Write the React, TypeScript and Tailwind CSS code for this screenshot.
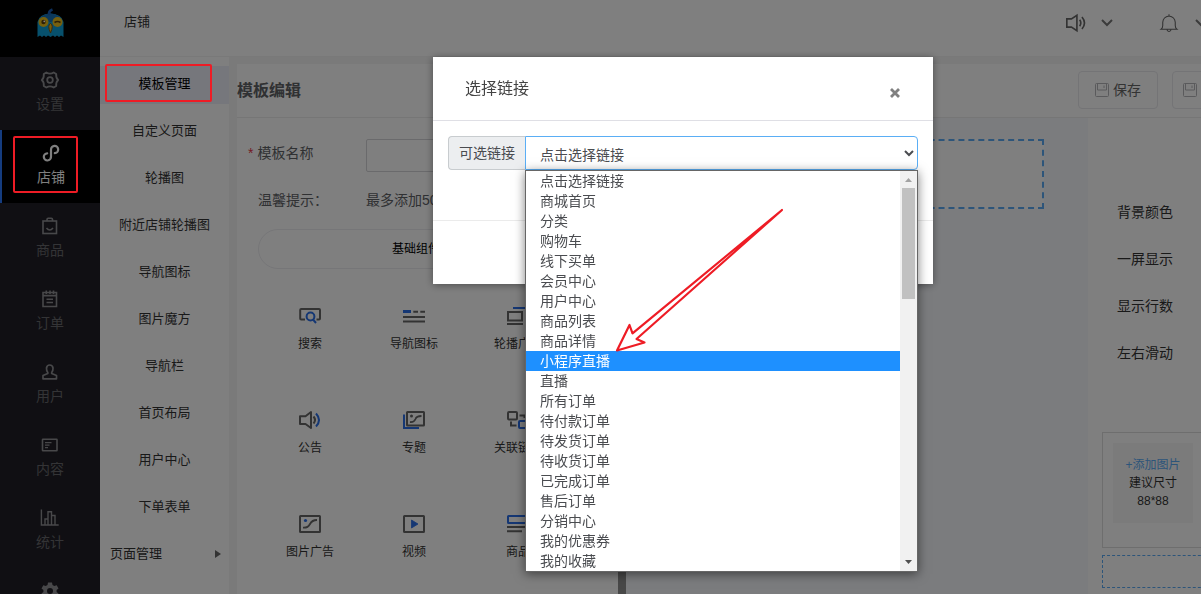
import type { ReactNode } from "react";
import clsx from "clsx";

function Svg({ size = "size-6", children }: { size?: string; children: ReactNode }) {
  return (
    <svg
      className={clsx(size, "shrink-0")}
      viewBox="0 0 24 24"
      fill="none"
      stroke="currentColor"
      strokeWidth="2"
      aria-hidden="true"
    >
      {children}
    </svg>
  );
}

const BLUE = "#2a6fe8";

const navItems: { label: string; active?: boolean; iconOnly?: boolean; icon: ReactNode }[] = [
  {
    label: "设置",
    icon: (
      <Svg>
        <path
          strokeWidth="1.8"
          strokeLinejoin="round"
          d="M8.300 4.500 Q12 6.800 15.700 4.500 L18.200 6 Q17.800 10 20.200 12 Q17.800 14 18.200 18 L15.700 19.500 Q12 17.200 8.300 19.500 L5.800 18 Q6.200 14 3.800 12 Q6.200 10 5.800 6 Z"
        />
        <circle cx="12" cy="12" r="2.800" strokeWidth="1.800" />
      </Svg>
    ),
  },
  {
    label: "店铺",
    active: true,
    icon: (
      <Svg>
        <path
          strokeLinecap="round"
          strokeWidth="2.200"
          d="M8.200 12.300 A3.600 3.600 0 1 0 12 15.800 V8.600 A3.600 3.600 0 1 1 15.800 12.100"
        />
      </Svg>
    ),
  },
  {
    label: "商品",
    icon: (
      <Svg>
        <rect x="5" y="7" width="13.500" height="12.500" strokeWidth="1.600" />
        <path strokeWidth="1.600" d="M9 7 V5.500 Q9 4.300 10.200 4.300 H13.300 Q14.500 4.300 14.500 5.500 V7 M8.500 14 Q11.750 18 15 14" />
      </Svg>
    ),
  },
  {
    label: "订单",
    icon: (
      <Svg>
        <path strokeWidth="1.600" d="M5 5.500 H18.500 V19.500 H5 Z M5 8.600 H18.500 M8.500 12.300 H15 M8.500 15.500 H15 M8.300 3.500 V7 M12 3.500 V7 M15.500 3.500 V7" />
      </Svg>
    ),
  },
  {
    label: "用户",
    icon: (
      <Svg>
        <path
          strokeWidth="1.700"
          strokeLinejoin="round"
          d="M9.800 12.500 Q8.300 10.500 8.500 8 Q9 5 11.700 5 Q14.500 5 15 8 Q15.200 10.500 13.700 12.500 V13.500 L18.500 15.500 V18.800 H5 V15.500 L9.800 13.500 Z"
        />
      </Svg>
    ),
  },
  {
    label: "内容",
    icon: (
      <Svg>
        <rect x="4.500" y="6.200" width="14.500" height="11.600" rx="0.500" strokeWidth="1.600" />
        <path strokeWidth="1.300" d="M7 9.700 H13.500 M7 12.200 H11.500 M7 14.700 H10" />
      </Svg>
    ),
  },
  {
    label: "统计",
    icon: (
      <Svg>
        <path strokeWidth="1.400" d="M3.400 3.500 V19 H20.700 M7 19 V13 H10 M10 19 V5.700 H13.500 V19 M13.500 9.500 H17 V19" />
      </Svg>
    ),
  },
  {
    label: "系统",
    iconOnly: true,
    icon: (
      <Svg>
        <path
          fill="currentColor"
          stroke="none"
          fillRule="evenodd"
          d="M10 3.500 H14 L14.500 6 L16.300 7 L18.700 6.200 L20.500 9.500 L18.600 11 V13 L20.500 14.500 L18.700 17.800 L16.300 17 L14.500 18 L14 20.500 H10 L9.500 18 L7.700 17 L5.300 17.800 L3.500 14.500 L5.400 13 V11 L3.500 9.500 L5.300 6.200 L7.700 7 L9.500 6 Z M12 9 A3 3 0 1 0 12 15 A3 3 0 1 0 12 9 Z"
        />
      </Svg>
    ),
  },
];

const menuItems = [
  "模板管理",
  "自定义页面",
  "轮播图",
  "附近店铺轮播图",
  "导航图标",
  "图片魔方",
  "导航栏",
  "首页布局",
  "用户中心",
  "下单表单",
];

const widgets: { label: string; icon: ReactNode }[] = [
  {
    label: "搜索",
    icon: (
      <Svg>
        <path d="M7 15.500 H3.200 Q2.200 15.500 2.200 14.500 V6 Q2.200 5 3.200 5 H21 Q22 5 22 6 V14.500 Q22 15.500 21 15.500 H18.500" />
        <circle cx="12.500" cy="12.500" r="3.900" stroke={BLUE} />
        <path d="M15 15.500 L18 19" stroke={BLUE} />
      </Svg>
    ),
  },
  {
    label: "导航图标",
    icon: (
      <Svg>
        <path d="M1 7.500 H9" stroke={BLUE} strokeWidth="3" />
        <path d="M11.300 7.800 H16 M18.300 7.800 H23 M1 13 H23 M1 17.500 H23" />
      </Svg>
    ),
  },
  {
    label: "轮播广告",
    icon: (
      <Svg>
        <path d="M7 4 H23" stroke={BLUE} />
        <path d="M2 8 H16 V16.500 H2 Z M1 20 H17" />
      </Svg>
    ),
  },
  {
    label: "公告",
    icon: (
      <Svg>
        <path strokeLinejoin="round" d="M2 8.200 H7.500 L13 4 V20 L7.500 16 H2 Z" />
        <path d="M15.500 8.500 Q18.500 12 15.500 15.500" />
        <path d="M18 5.500 Q24 12 18 18.500" stroke={BLUE} />
      </Svg>
    ),
  },
  {
    label: "专题",
    icon: (
      <Svg>
        <rect x="5" y="4" width="17" height="13.500" rx="0.500" />
        <path strokeWidth="1.800" d="M8 14 Q12 14.500 13.500 11 Q14.500 8 19.500 8" />
        <circle cx="9.500" cy="8" r="1.500" fill="currentColor" stroke="none" />
        <path d="M2 6.500 V20 H17" stroke={BLUE} />
      </Svg>
    ),
  },
  {
    label: "关联链接",
    icon: (
      <Svg>
        <rect x="2" y="4" width="9" height="7.500" rx="1" />
        <path d="M13.500 7.500 H18.500 V10 M5 13.500 V17.500 H10.500" />
        <rect x="13" y="13" width="9" height="7" rx="1" stroke={BLUE} />
      </Svg>
    ),
  },
  {
    label: "图片广告",
    icon: (
      <Svg>
        <rect x="2" y="4" width="20" height="16" rx="0.500" />
        <path strokeWidth="1.800" d="M5 15.700 Q10 16 12 12 Q14 8 19 8" />
        <circle cx="7.500" cy="8.500" r="1.600" fill={BLUE} stroke="none" />
      </Svg>
    ),
  },
  {
    label: "视频",
    icon: (
      <Svg>
        <rect x="2" y="4" width="20" height="16" rx="0.500" />
        <path d="M9.500 8 L16 12 L9.500 16 Z" fill={BLUE} stroke={BLUE} strokeWidth="0.800" strokeLinejoin="round" />
      </Svg>
    ),
  },
  {
    label: "商品",
    icon: (
      <Svg>
        <rect x="2" y="4" width="20" height="7" rx="0.500" stroke={BLUE} />
        <path d="M1 15 H23 M1 19.300 H16" />
      </Svg>
    ),
  },
];

const linkOptions = [
  "点击选择链接",
  "商城首页",
  "分类",
  "购物车",
  "线下买单",
  "会员中心",
  "用户中心",
  "商品列表",
  "商品详情",
  "小程序直播",
  "直播",
  "所有订单",
  "待付款订单",
  "待发货订单",
  "待收货订单",
  "已完成订单",
  "售后订单",
  "分销中心",
  "我的优惠券",
  "我的收藏",
];

function OwlLogo() {
  return (
    <svg className="h-8 w-8" viewBox="0 0 32 32" aria-hidden="true">
      <path
        d="M3.500 29 V14 Q5 6 16 5.500 Q28 6 29.500 14 V29 L27 27.500 L25 29 L23 27.500 L21 29 L19 27.500 L16.500 29 L14 27.500 L12 29 L10 27.500 L8 29 L6 27.500 Z"
        fill="#0fa0d8"
      />
      <path d="M5 12 Q8 6 16 5.500 Q25 6 28 12 L16 14 Z" fill="#1872b8" />
      <path d="M15.500 7 Q14 3 18.500 1.500" fill="none" stroke="#1a5fb8" strokeWidth="2.800" />
      <circle cx="9.500" cy="14" r="5" fill="#ecc01c" />
      <circle cx="23.500" cy="14" r="5" fill="#ecc01c" />
      <circle cx="9.500" cy="14" r="2.200" fill="#5a4010" />
      <circle cx="10.300" cy="13.300" r="0.900" fill="#fff" />
      <path d="M20.500 14.500 Q23.500 12.500 26.500 14.500" fill="none" stroke="#5a4010" strokeWidth="1.600" />
      <path d="M16.500 15.500 Q20 17 16.500 25 Q13 17 16.500 15.500 Z" fill="#f0b818" stroke="#7a5410" strokeWidth="1" />
    </svg>
  );
}

function Sidebar() {
  return (
    <nav className="flex w-[100px] shrink-0 flex-col overflow-hidden bg-[#201f26]">
      <div className="flex h-[57px] shrink-0 items-center justify-center bg-black pb-2.5">
        <OwlLogo />
      </div>
      {navItems.map((item) => (
        <a
          key={item.label}
          href="#"
          aria-label={item.label}
          className={clsx(
            "relative flex h-[73px] shrink-0 flex-col items-center gap-0.5 pt-[11px] text-sm leading-5",
            item.active
              ? "border-l-2 border-[#2a78ff] bg-black text-white"
              : "text-[#68686c]",
          )}
        >
          <span className={item.active ? "text-white" : "text-[#909094]"}>{item.icon}</span>
          {!item.iconOnly && item.label}
          {item.active && (
            <span className="absolute top-1.5 left-[11px] z-50 h-[57px] w-[65px] rounded-xs border-2 border-[#ee1c25]" />
          )}
        </a>
      ))}
    </nav>
  );
}

function TopBar() {
  return (
    <header className="flex h-[57px] shrink-0 border-b border-[#f2f2f2] bg-white pl-6 text-[13px] leading-5 text-[#333]">
      <span className="pt-3">店铺</span>
      <div className="ml-auto flex h-[46px] w-[136px] items-center overflow-hidden text-[#666]">
        <Svg size="size-[22px]">
          <path strokeWidth="1.800" d="M2 7.500 H7 L13 3.500 V20.500 L7 16.500 H2 Z M16 8.500 Q18.500 12 16 15.500 M18.500 5.500 Q24 12 18.500 18.500" />
        </Svg>
        <span className="ml-3.5 text-[#777]">
          <Svg size="size-3">
            <path strokeWidth="4" d="M2 6 L12 16 L22 6" />
          </Svg>
        </span>
        <span className="ml-[46px]">
          <Svg size="size-5">
            <path strokeWidth="1.300" d="M2.500 19.500 H21.500 Q19.500 18 19.500 15 V11 Q19 4.500 12 3.500 Q5 4.500 4.500 11 V15 Q4.500 18 2.500 19.500 Z M9.500 20 Q12 24.500 14.500 20 M12 3.500 V1.500" />
          </Svg>
        </span>
        <span className="ml-4 text-[#777]">
          <Svg size="size-3">
            <path strokeWidth="4" d="M2 6 L12 16 L22 6" />
          </Svg>
        </span>
      </div>
    </header>
  );
}

function SubMenu() {
  return (
    <aside className="flex w-[129px] shrink-0 flex-col gap-[9px] bg-white pt-[9px] text-[13px] text-[#333]">
      {menuItems.map((label, i) => (
        <a
          key={label}
          href="#"
          className={clsx(
            "relative flex h-[38px] shrink-0 items-center justify-center pb-0.5",
            i === 0 && "bg-[#edeef8] text-black",
          )}
        >
          {label}
          {i === 0 && (
            <span className="absolute -top-0.5 left-[5px] z-50 h-[38px] w-[107px] rounded-xs border-2 border-[#ee1c25]" />
          )}
        </a>
      ))}
      <a href="#" className="flex h-[38px] shrink-0 items-center justify-between pr-2 pb-0.5 pl-2.5">
        页面管理
        <svg className="h-2 w-[6px]" viewBox="0 0 6 8" aria-hidden="true">
          <path d="M0 0 L6 4 L0 8 Z" fill="#666" />
        </svg>
      </a>
    </aside>
  );
}

function SaveIcon() {
  return (
    <svg className="size-3.5 shrink-0" viewBox="0 0 14 14" fill="none" stroke="#b4b4b8" aria-hidden="true">
      <rect x="0.500" y="0.500" width="13" height="13" rx="1" />
      <path d="M2.500 0.500 V7 H11.500 V0.500 M9 2.500 V5" />
    </svg>
  );
}

const toolButton =
  "flex h-[38px] w-20 shrink-0 items-center gap-1 rounded border border-[#e8e8ec] text-sm text-[#666]";

function ComponentPanel() {
  return (
    <div className="flex w-[389px] shrink-0 overflow-hidden">
      <div className="min-w-0 flex-1 overflow-hidden pt-[21px] pl-[11px] text-sm text-[#606266]">
        <div className="flex items-start">
          <label htmlFor="tpl-name" className="w-[118px] shrink-0 leading-7">
            <span className="mr-1 text-[#e8394a]">*</span>
            模板名称
          </label>
          <input id="tpl-name" className="h-[33px] min-w-0 flex-1 rounded-xs border border-[#d4d4d8]" />
        </div>
        <div className="mt-[18px] flex pl-2.5 leading-5">
          <span className="w-[108px] shrink-0">温馨提示：</span>
          <span className="shrink-0 whitespace-nowrap">最多添加50个组件</span>
        </div>
        <div className="mt-[19px] ml-2.5 w-[316px]">
          <button
            type="button"
            className="h-10 w-full rounded-full border border-[#ececf0] text-center text-xs text-black"
          >
            基础组件
          </button>
          <div className="mt-[7px] grid w-[312px] grid-cols-3">
            {widgets.map((w) => (
              <button
                key={w.label}
                type="button"
                className="flex h-[104px] flex-col items-center justify-center gap-[7px] text-xs leading-[18px] text-[#333] outline-none"
              >
                <span className="text-[#666]">{w.icon}</span>
                {w.label}
              </button>
            ))}
          </div>
        </div>
      </div>
      <div className="w-2 shrink-0 bg-[#909090]" />
    </div>
  );
}

function SettingsPanel() {
  return (
    <div className="w-[113px] shrink-0 overflow-hidden bg-white pl-3.5 text-sm text-[#333]">
      <div className="flex flex-col gap-[27px] pt-[84px] pl-[15px] leading-5">
        <span>背景颜色</span>
        <span>一屏显示</span>
        <span>显示行数</span>
        <span>左右滑动</span>
      </div>
      <div className="mt-[69px] h-[116px] w-[240px] border border-[#dcdcdc] p-2.5">
        <div className="flex size-20 flex-col items-center justify-center bg-[#f7f7f7] text-xs leading-[18px]">
          <button type="button" className="whitespace-nowrap text-[#5aaaf5]">
            +添加图片
          </button>
          <span>建议尺寸</span>
          <span>88*88</span>
        </div>
      </div>
      <div className="mt-[7px] h-[33px] w-[240px] border border-dashed border-[#5aaaf5]" />
    </div>
  );
}

function Editor() {
  return (
    <main className="mt-[7px] ml-2 flex min-w-0 flex-1 flex-col bg-white">
      <div className="flex h-[54px] shrink-0 items-center overflow-hidden border-b border-[#ececec]">
        <h1 className="text-base font-bold text-[#606266]">模板编辑</h1>
        <div className="ml-auto flex w-[123px] gap-3.5 overflow-hidden pb-0.5">
          <button type="button" className={clsx(toolButton, "pl-4")}>
            <SaveIcon />
            保存
          </button>
          <button type="button" aria-label="保存并返回" className={clsx(toolButton, "pl-2.5")}>
            <SaveIcon />
          </button>
        </div>
      </div>
      <div className="flex min-h-0 flex-1">
        <ComponentPanel />
        <div className="min-w-0 flex-1 bg-[#f6f8fc] px-11 pt-[21px]">
          <div className="h-[70px] border-2 border-dashed border-[#5aaaf5] bg-white" />
        </div>
        <SettingsPanel />
      </div>
    </main>
  );
}

function OptionList() {
  return (
    <div className="absolute top-full right-0 left-0 z-10 flex border border-[#666] bg-white shadow-[0_2px_10px_rgba(0,0,0,0.5)]">
      <ul role="listbox" aria-label="可选链接" className="min-w-0 flex-1 text-sm leading-5 text-[#4a4c50]">
        {linkOptions.map((label) => {
          const selected = label === "小程序直播";
          return (
            <li
              key={label}
              role="option"
              aria-selected={selected}
              className={clsx("h-5 pl-3.5", selected && "bg-[#1e90ff] text-white")}
            >
              {label}
            </li>
          );
        })}
      </ul>
      <div className="flex w-[17px] shrink-0 flex-col items-center bg-[#f1f1f1]">
        <svg className="h-[17px] w-[17px] shrink-0" viewBox="0 0 17 17" aria-hidden="true">
          <path d="M5 11 L8.500 7 L12 11 Z" fill="#a3a3a3" />
        </svg>
        <div className="h-[111px] w-[13px] bg-[#c1c1c1]" />
        <svg className="mt-auto h-[17px] w-[17px] shrink-0" viewBox="0 0 17 17" aria-hidden="true">
          <path d="M5 6 L8.500 10 L12 6 Z" fill="#505050" />
        </svg>
      </div>
      <svg className="absolute top-[34px] left-[84px] h-[152px] w-[180px]" viewBox="610 205 180 152" aria-hidden="true">
        <path
          d="M782 210 L632.500 333.300 L629.500 325 L617 350.500 L644.500 342.500 L636.500 339 Z"
          fill="none"
          stroke="#ee1c25"
          strokeWidth="2.200"
          strokeLinejoin="round"
        />
      </svg>
    </div>
  );
}

function LinkDialog() {
  return (
    <div className="fixed inset-0 z-40 bg-black/50 pt-[57px] pl-[433px]">
      <section
        role="dialog"
        aria-labelledby="dialog-title"
        className="w-[500px] bg-white shadow-[0_1px_8px_rgba(0,0,0,0.4)]"
      >
        <div className="flex h-16 items-center justify-between border-b border-[#dfdfe5] px-8">
          <h2 id="dialog-title" className="text-base text-[#444]">
            选择链接
          </h2>
          <button type="button" aria-label="关闭" className="mt-2 p-px">
            <svg className="size-2.5" viewBox="0 0 10 10" stroke="#808080" strokeWidth="2.800" aria-hidden="true">
              <path d="M1 1 L9 9 M9 1 L1 9" />
            </svg>
          </button>
        </div>
        <div className="h-[99px] px-[15px] pt-[15px]">
          <div className="relative flex h-[34px] text-sm text-[#4a4c50]">
            <label
              htmlFor="link-select"
              className="flex w-[77px] shrink-0 items-center justify-center rounded-l border border-r-0 border-[#c8cccf] bg-[#eceef0]"
            >
              可选链接
            </label>
            <select
              id="link-select"
              className="min-w-0 flex-1 rounded-r border border-[#5aaef5] bg-white pt-1 pl-2.5 text-sm text-[#4a4c50] outline-none"
            >
              <option>点击选择链接</option>
            </select>
            <div className="absolute top-full right-0 left-[77px]">
              <OptionList />
            </div>
          </div>
        </div>
        <div className="h-16 border-t border-[#ebebeb]" />
      </section>
    </div>
  );
}

export default function App() {
  return (
    <div className="flex h-screen overflow-hidden bg-[#f4f4f5] font-['Liberation_Sans','Noto_Sans_CJK_SC',sans-serif]">
      <Sidebar />
      <div className="flex min-w-0 flex-1 flex-col">
        <TopBar />
        <div className="flex min-h-0 flex-1">
          <SubMenu />
          <Editor />
        </div>
      </div>
      <LinkDialog />
    </div>
  );
}
